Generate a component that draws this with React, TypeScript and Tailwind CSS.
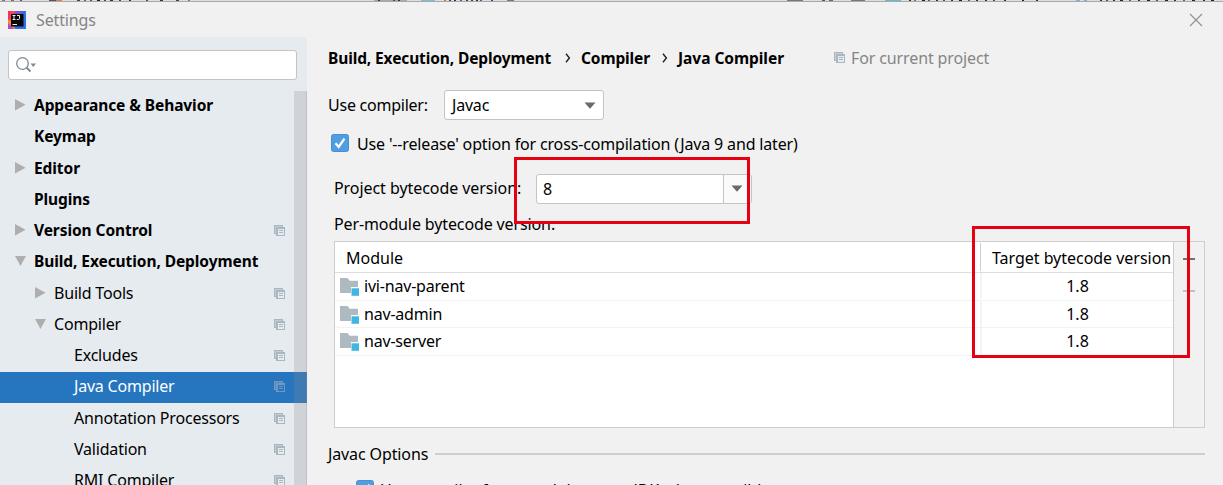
import type { ReactNode } from "react";

function CopyIcon({ selected = false }: { selected?: boolean }) {
  const c = selected ? "#7398bd" : "#aab7bf";
  const f = selected ? "#2675bf" : "#e6ebef";
  return (
    <svg width="12" height="12" viewBox="0 0 12 12" className="shrink-0" shapeRendering="crispEdges">
      <path d="M0 0h9v2h-1v-1h-7v7h1v1h-2z" fill={c} />
      <path d="M1 1h7v1h-6v6h-1z" fill={c} opacity="0.6" />
      <path d="M2 2h9v9h-9z" fill={c} />
      <path d="M4 4h6v6h-6z" fill={f} />
      <path d="M5 5h4v1h-4zM5 7h4v1h-4z" fill={c} />
    </svg>
  );
}

function Arrow({ open }: { open: boolean }) {
  return (
    <svg width="12" height="12" viewBox="0 0 12 12" className="shrink-0">
      <path d={open ? "M1 1h11L6.5 11z" : "M1 0v11.4L11.6 5.7z"} fill="#aeaeae" />
    </svg>
  );
}

type Row = { label: string; level: 0 | 1 | 2; arrow?: "open" | "closed"; icon?: boolean; size?: string; selected?: boolean };

const rows: Row[] = [
  { label: "Appearance & Behavior", level: 0, arrow: "closed" },
  { label: "Keymap", level: 0, size: "h-[32px] pb-[4px]" },
  { label: "Editor", level: 0, arrow: "closed" },
  { label: "Plugins", level: 0 },
  { label: "Version Control", level: 0, arrow: "closed", icon: true },
  { label: "Build, Execution, Deployment", level: 0, arrow: "open", size: "h-[32px] pb-[4px]" },
  { label: "Build Tools", level: 1, arrow: "closed", icon: true },
  { label: "Compiler", level: 1, arrow: "open", icon: true },
  { label: "Excludes", level: 2, icon: true },
  { label: "Java Compiler", level: 2, icon: true, selected: true },
  { label: "Annotation Processors", level: 2, icon: true, size: "h-[32px] pb-[2px]" },
  { label: "Validation", level: 2, icon: true },
  { label: "RMI Compiler", level: 2, icon: true },
];

const padding = ["pl-[14px]", "pl-[34px]", "pl-[54px]"];

function TreeRow({ row }: { row: Row }) {
  return (
    <div
      className={`flex shrink-0 items-center pr-[21px] ${padding[row.level]} ${row.size ?? "h-[31px] pb-[3px]"} ${
        row.selected ? "bg-[#2675bf] text-white" : ""
      }`}
    >
      <div className="flex w-[20px] shrink-0">{row.arrow && <Arrow open={row.arrow === "open"} />}</div>
      <span className={`flex-1 ${row.level === 0 ? "text-[15.5px] font-bold tracking-[-0.08px]" : "tracking-[-0.2px]"}`}>{row.label}</span>
      {row.icon && <span className="pt-[2px]"><CopyIcon selected={row.selected} /></span>}
    </div>
  );
}

function Logo() {
  return (
    <svg width="18" height="18" viewBox="0 0 18 18" className="shrink-0">
      <path d="M0 0h18v18H0z" fill="#2b70e8" />
      <path d="M0 0h10L5 10 0 11z" fill="#f0523d" />
      <path d="M0 0h3L2 7 0 9z" fill="#f5306c" />
      <path d="M8 0h5v3H5z" fill="#8054c8" />
      <path d="M0 9l4 1 3 8H5L0 14z" fill="#f58a3a" />
      <path d="M0 12l6 6H0z" fill="#b14ac0" />
      <path d="M3 3h12.5v12.5H3z" fill="#080808" />
      <path d="M4.5 4.5h3M6 4.5v4M4.5 8.5h3M9 4.5h2.5v3q0 1-1 1H8.8M4.5 13.5h4.5" stroke="#f0f0f0" strokeWidth="1" fill="none" />
    </svg>
  );
}

function Checkbox() {
  return (
    <svg width="18" height="18" viewBox="0 0 18 18" className="shrink-0">
      <rect x="0.5" y="0.5" width="17" height="17" rx="2" fill="#4f9ee3" stroke="#4790d0" />
      <path d="M4.5 9.2l3.2 3.6 5.7-8.2" fill="none" stroke="#fff" strokeWidth="2.3" />
    </svg>
  );
}

function DownArrow() {
  return (
    <svg width="12" height="7" viewBox="0 0 12 7" className="shrink-0">
      <path d="M0.5 0.5h11L6 6.8z" fill="#6a6a6a" />
    </svg>
  );
}

function Chevron() {
  return (
    <svg width="6" height="10" viewBox="0 0 6 10" className="shrink-0">
      <path d="M1 0.8L4.4 5 1 9.2" fill="none" stroke="#222" strokeWidth="1.4" />
    </svg>
  );
}

function ModuleIcon() {
  return (
    <svg width="20" height="18" viewBox="0 0 20 18" className="shrink-0">
      <path d="M0 0h7.5l2.2 2.8H18V9h-7v6H0z" fill="#aeb9c0" />
      <path d="M11.5 10.3H19v7.5h-7.5z" fill="#40b6e0" />
    </svg>
  );
}

function ModuleRow({ name, size }: { name: string; size: string }) {
  return (
    <div className={`flex border-b border-[#f2f2f2] ${size}`}>
      <div className="flex flex-1 items-center gap-[4px] pl-[5px]">
        <span className="pt-[2px]"><ModuleIcon /></span>
        <span className="tracking-[-0.2px]">{name}</span>
      </div>
      <div className="flex w-[193px] items-center justify-center border-l-2 border-[#f4f4f4]">1.8</div>
    </div>
  );
}

const strip: [number, number, string][] = [
  [2, 3, "#777"], [11, 3, "#8a6a50"], [20, 2, "#555"], [49, 7, "#555"], [56, 6, "#e27b45"], [77, 3, "#445"], [84, 2, "#8a5a30"], [90, 2, "#335577"], [97, 3, "#222"], [104, 2, "#225588"], [110, 3, "#333"], [119, 2, "#664422"], [129, 2, "#333"], [146, 2, "#225588"], [160, 3, "#333"], [176, 3, "#444"], [188, 2, "#a07050"],
  [374, 33, "#a8a8a8"], [378, 2, "#333"], [393, 2, "#225588"], [398, 2, "#333"], [421, 14, "#7bc0d3"], [444, 2, "#c07a40"], [449, 2, "#224488"], [454, 2, "#333"], [460, 2, "#446699"], [466, 2, "#553322"], [471, 2, "#224488"], [476, 2, "#333"], [480, 2, "#446699"], [491, 2, "#224488"], [507, 7, "#777"],
  [787, 16, "#777"], [822, 3, "#555"], [829, 4, "#666"], [851, 14, "#777"], [885, 16, "#6bb8d0"], [909, 2, "#333"], [914, 2, "#557799"], [922, 3, "#222"], [928, 2, "#885533"], [936, 2, "#333"], [943, 2, "#335577"], [951, 2, "#333"], [959, 3, "#222"], [968, 2, "#885533"], [976, 2, "#333"], [985, 2, "#333"], [993, 2, "#335577"], [1004, 2, "#333"], [1022, 2, "#222"], [1036, 2, "#333"],
  [1076, 4, "#6bb8d0"], [1084, 3, "#6bb8d0"], [1100, 2, "#333"], [1106, 2, "#335577"], [1113, 2, "#333"], [1120, 3, "#222"], [1129, 2, "#885533"], [1138, 2, "#333"], [1147, 3, "#222"], [1156, 2, "#335577"], [1165, 3, "#222"], [1174, 2, "#333"], [1183, 2, "#885533"], [1192, 3, "#222"], [1203, 2, "#333"], [1211, 3, "#222"],
];

function Field({ children, className }: { children: ReactNode; className: string }) {
  return <div className={`flex items-center rounded-[3px] border border-[#c4c4c4] bg-white ${className}`}>{children}</div>;
}

export default function App() {
  return (
    <div className="relative flex h-[485px] w-[1223px] flex-col overflow-hidden whitespace-nowrap bg-[#f1f1f1] font-['Noto_Sans',sans-serif] text-[16px] leading-[20px] text-black">
      <svg width="1223" height="1" className="shrink-0" shapeRendering="crispEdges">
        <path d="M0 0h1223v1H0z" fill="#dedede" />
        {strip.map(([x, w, c]) => <rect key={x} x={x} y="0" width={w} height="1" fill={c} />)}
      </svg>
      <header className="flex h-[36px] shrink-0 items-center border-t border-[#a9a9a9] pl-[8px] pr-[20px] text-[#858585]">
        <Logo />
        <span className="ml-[10px] flex-1 pt-px tracking-[-0.15px]">Settings</span>
        <svg width="14" height="14" viewBox="0 0 14 14"><path d="M1 1l12 12M13 1L1 13" stroke="#929292" strokeWidth="1.2" /></svg>
      </header>
      <div className="flex min-h-0 flex-1">
        <aside className="relative flex w-[307px] shrink-0 flex-col overflow-hidden bg-[#e6ebef] pt-[13px]">
          <Field className="mb-[11px] ml-[8px] h-[30px] w-[289px] shrink-0 pl-[7px]">
            <svg width="22" height="18" viewBox="0 0 22 18">
              <circle cx="6.5" cy="7.5" r="5.8" fill="none" stroke="#7f8b94" strokeWidth="1.3" />
              <path d="M10.5 11.5l4 4" stroke="#7f8b94" strokeWidth="2" />
              <path d="M14.5 7.5H20l-2.75 3.5z" fill="#7f8b94" />
            </svg>
          </Field>
          {rows.map((row) => <TreeRow key={row.label} row={row} />)}
          <div className="absolute bottom-0 right-0 top-[54px] w-[13px] border-r border-[#8c8c8c]/25 bg-[#8c8c94]/25" />
        </aside>
        <main className="flex min-w-0 flex-1 flex-col pl-[21px]">
          <div className="flex h-[44px] shrink-0 items-center pb-[2px] text-[15.5px] font-bold tracking-[-0.12px]">
            <span className="w-[237px]">Build, Execution, Deployment</span>
            <Chevron />
            <span className="ml-[10px] w-[81px]">Compiler</span>
            <Chevron />
            <span className="ml-[10px] w-[156px] tracking-[-0.04px]">Java Compiler</span>
            <CopyIcon />
            <span className="ml-[5px] text-[16px] font-normal tracking-[-0.12px] text-[#858585]">For current project</span>
          </div>
          <div className="flex h-[48px] shrink-0 items-center">
            <span className="w-[116px] tracking-[-0.24px]">Use compiler:</span>
            <Field className="h-[30px] w-[160px] justify-between pl-[7px] pr-[7px]"><span className="tracking-[-0.2px]">Javac</span><DownArrow /></Field>
          </div>
          <div className="flex h-[29px] shrink-0 items-center pb-[2px] pl-[3px]">
            <Checkbox />
            <span className="ml-[8px] pt-[2px] tracking-[-0.16px]">Use '--release' option for cross-compilation (Java 9 and later)</span>
          </div>
          <div className="flex h-[59px] shrink-0 items-center pl-[6px] pt-[2px]">
            <span className="w-[202px] pb-px tracking-[-0.06px]">Project bytecode version:</span>
            <Field className="h-[30px] w-[216px] overflow-hidden">
              <span className="flex-1 pl-[6px]">8</span>
              <div className="flex h-full w-[28px] items-center border-l border-[#c4c4c4] bg-[#fafafa] pl-[7px]"><DownArrow /></div>
            </Field>
          </div>
          <div className="flex h-[24px] shrink-0 pl-[6px]"><span className="-mt-[3px] tracking-[-0.12px]">Per-module bytecode version:</span></div>
          <div className="ml-[6px] flex h-[187px] w-[871px] shrink-0 border border-[#cdcdcd]">
            <div className="flex w-[838px] flex-col bg-white">
              <div className="flex h-[31px] border-b border-[#dedede] py-px">
                <div className="flex flex-1 items-center pl-[11px] pt-[2px]">Module</div>
                <div className="flex w-[193px] items-center border-l border-[#cdcdcd] pl-[11px] pt-[2px] tracking-[-0.03px]">Target bytecode version</div>
              </div>
              <ModuleRow name="ivi-nav-parent" size="h-[28px] pb-px" />
              <ModuleRow name="nav-admin" size="h-[27px]" />
              <ModuleRow name="nav-server" size="h-[28px] pb-px" />
            </div>
            <div className="flex flex-1 flex-col items-center border-l border-[#cdcdcd] bg-[#f1f1f1] pt-[10px]">
              <svg width="14" height="42" viewBox="0 0 14 42">
                <path d="M7 1v12" stroke="#d8d8d8" strokeWidth="2" />
                <path d="M1 7h12" stroke="#727272" strokeWidth="2" />
                <path d="M1 39h12" stroke="#c0c0c0" strokeWidth="2" />
              </svg>
            </div>
          </div>
          <div className="flex h-[52px] shrink-0 items-center">
            <span className="w-[107px] tracking-[-0.12px]">Javac Options</span>
            <div className="h-[2px] w-[770px] bg-[#cecece]" />
          </div>
          <div className="flex h-[20px] shrink-0 items-start pl-[28px]">
            <Checkbox />
            <span className="ml-[6px] tracking-[-0.05px]">Use compiler from module target JDK when possible</span>
          </div>
        </main>
      </div>
      <div className="absolute left-[514px] top-[157px] h-[67px] w-[236px] border-[3px] border-[#e60012]" />
      <div className="absolute left-[972px] top-[226px] h-[132px] w-[218px] border-[3px] border-[#e60012]" />
    </div>
  );
}
